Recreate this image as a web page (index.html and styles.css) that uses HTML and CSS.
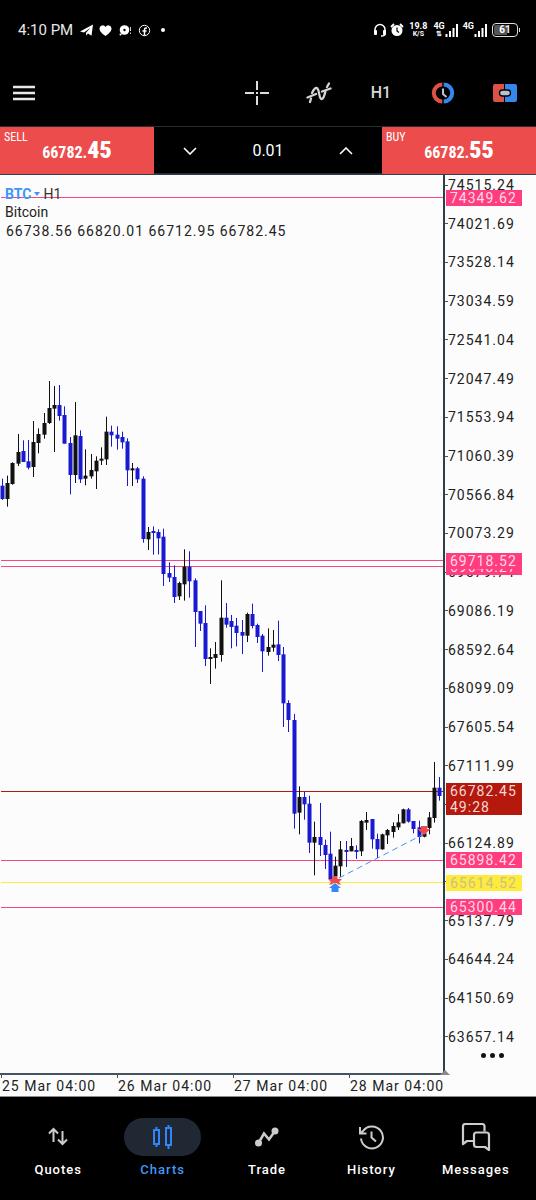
FILE: index.html
```html
<!DOCTYPE html>
<html lang="en">
<head>
<meta charset="utf-8">
<meta name="viewport" content="width=device-width, initial-scale=1">
<title>BTC H1 chart</title>
<link rel="stylesheet" href="styles.css">
</head>
<body>
<div class="status">
  <span class="clock">4:10 PM</span>
  <svg class="status-left" width="80" height="16" viewBox="0 0 80 16" aria-hidden="true">
    <path d="M-1 9.500 12 2.500 10.500 13.800 7 11.500 5 13.500V10.800L9.500 5.800 3 10.500Z" fill="#fff"/>
    <path d="M24.500 14C19.500 10.500 18.500 8.500 18.500 6.500a3.200 3.200 0 0 1 6-1.500A3.200 3.200 0 0 1 30.500 6.500c0 2-1 4-6 7.500Z" fill="#fff"/>
    <circle cx="43.500" cy="8" r="4.800" fill="#fff"/><circle cx="43.500" cy="8" r="1.200" fill="#000"/>
    <circle cx="39.500" cy="12.500" r="1" fill="#fff"/><path d="M49.500 5v4M49.500 10.500v1.500" stroke="#ccc" stroke-width="1"/>
    <circle cx="63.500" cy="8.500" r="5.200" fill="none" stroke="#fff"/>
    <path d="M66 6H65q-1.500 0-1.500 1.500v6M61.500 9h4" fill="none" stroke="#fff" stroke-width="1.500"/>
  </svg>
  <span class="more-dot"></span>
  <div class="status-right">
    <svg width="31" height="16" viewBox="0 0 31 16" aria-hidden="true">
      <path d="M2 9V7.500a5 5 0 0 1 10 0V9M12 11v1q0 2-4 2" fill="none" stroke="#fff" stroke-width="1.500"/>
      <rect x="1" y="8" width="3" height="5" rx="1" fill="#fff"/><rect x="10" y="8" width="3" height="5" rx="1" fill="#fff"/>
      <circle cx="24" cy="8.500" r="5.500" fill="#fff"/><path d="M24 5.500V9l2 1.500" fill="none" stroke="#000" stroke-width="1.200"/>
      <path d="M18 5l3-3M30 5l-3-3" stroke="#fff" stroke-width="1.800"/>
    </svg>
    <div class="speed"><b>19.8</b><small>K/S</small></div>
    <div class="signal"><div class="network"><b>4G</b><small>⇅</small></div>
      <svg width="13" height="13" viewBox="0 0 13 13" aria-hidden="true"><path d="M1.500 13v-3M5 13V7M8.500 13V4M12 13V0" stroke="#fff" stroke-width="2"/></svg></div>
    <div class="signal"><div class="network"><b>4G</b></div>
      <svg width="13" height="13" viewBox="0 0 13 13" aria-hidden="true"><path d="M1.500 13v-3M5 13V7M8.500 13V4M12 13V0" stroke="#fff" stroke-width="2"/></svg></div>
    <div class="battery"><span>61</span></div>
  </div>
</div>

<header class="toolbar">
  <button class="tool menu" aria-label="Menu"><svg width="22" height="16" viewBox="0 0 22 16"><path d="M0 2h22M0 8h22M0 14h22" stroke="#e8e8e8" stroke-width="2.400"/></svg></button>
  <button class="tool" aria-label="Crosshair"><svg width="26" height="26" viewBox="0 0 26 26"><path d="M13 1v9M13 16v9M1 13h9M16 13h9" stroke="#ddd" stroke-width="2"/><rect x="12" y="12" width="2" height="2" fill="#ddd"/></svg></button>
  <button class="tool" aria-label="Indicators"><svg width="26" height="26" viewBox="0 0 26 26" fill="none" stroke="#d4d4d4" stroke-width="2.300" stroke-linecap="round"><path d="M4 22 5 18.500M6 13Q9 6.500 11.500 8.500c2 2 1.500 10.500 4 10.500 2.500 0 3-4.500 4-8M21 7 23 3.500"/><path d="M1.500 17.500 10 14M16 11.500 24.500 8.500"/></svg></button>
  <button class="tool period">H1</button>
  <button class="tool" aria-label="Sessions"><svg width="26" height="22" viewBox="0 0 26 22"><path d="M12.300 2.500A8.500 8.500 0 0 0 12.300 19.500" fill="none" stroke="#dc5148" stroke-width="4"/><path d="M13.700 2.500A8.500 8.500 0 0 1 13.700 19.500" fill="none" stroke="#3587ed" stroke-width="4"/><path d="M13 6.500V12l3.500 3" fill="none" stroke="#b5c3d0" stroke-width="2"/></svg></button>
  <button class="tool" aria-label="One click trading"><svg width="26" height="20" viewBox="0 0 26 20"><path d="M1 3q0-2 2-2h9v18H3q-2 0-2-2Z" fill="#dc5148"/><path d="M13 1h10q2 0 2 2v14q0 2-2 2H13Z" fill="#3587ed"/><rect x="7.500" y="7" width="11" height="6" rx="3" fill="#b5c3d0" stroke="#000" stroke-width="1.300"/></svg></button>
</header>

<section class="deal">
  <button class="quote"><span class="side">SELL</span><span class="price">66782.<b>45</b></span></button>
  <div class="volume">
    <button aria-label="Decrease"><svg width="14" height="8" viewBox="0 0 14 8"><path d="M1 1l6 6 6-6" fill="none" stroke="#fff" stroke-width="1.600"/></svg></button>
    <input aria-label="Volume" value="0.01">
    <button aria-label="Increase"><svg width="14" height="8" viewBox="0 0 14 8"><path d="M1 7l6-6 6 6" fill="none" stroke="#fff" stroke-width="1.600"/></svg></button>
  </div>
  <button class="quote"><span class="side">BUY</span><span class="price">66782.<b>55</b></span></button>
</section>

<main class="chart">
  <div class="plot">
    <svg class="candles" viewBox="0 175 443 898" preserveAspectRatio="none" role="img" aria-label="Bitcoin hourly candles">
      <g class="levels"></g>
      <g class="bars"></g>
      <g class="trades">
        <path class="trade-line" d="M339 878 422 835"/>
        <path fill="#ef4b4b" d="M332.500 876h5v3h4.500l-3 3 2 2.500h-3l-1.500-1.500h-3l-1.500 1.500h-3l2-2.500-3-3h4.500Z"/>
        <path fill="#3388fa" d="M335 883l6 5h-2.500v4h-7v-4h-2.500Z"/>
        <path fill="#ef4b4b" d="M421 826h6v3h3.500l-6.500 6-6.500-6h3.500Z"/>
      </g>
    </svg>
    <div class="legend">
      <div class="symbol"><button>BTC <i></i></button><span>H1</span></div>
      <div>Bitcoin</div>
      <div class="ohlc">66738.56 66820.01 66712.95 66782.45</div>
    </div>
  </div>
  <div class="scale">
    <ul class="ticks">
      <li>74515.24</li><li>74021.69</li><li>73528.14</li><li>73034.59</li><li>72541.04</li><li>72047.49</li><li>71553.94</li><li>71060.39</li><li>70566.84</li><li>70073.29</li><li>69579.74</li><li>69086.19</li><li>68592.64</li><li>68099.09</li><li>67605.54</li><li>67111.99</li><li></li><li>66124.89</li><li></li><li>65137.79</li><li>64644.24</li><li>64150.69</li><li>63657.14</li>
    </ul>
    <div class="tags"></div>
    <button class="more" aria-label="More"><i></i><i></i><i></i></button>
  </div>
  <div class="dates"><span>25 Mar 04:00</span><span>26 Mar 04:00</span><span>27 Mar 04:00</span><span>28 Mar 04:00</span></div>
</main>

<nav class="tabs">
  <a href="#quotes"><span class="pill"><svg width="20" height="20" viewBox="0 0 20 20" fill="none" stroke="#ccc" stroke-width="2"><path d="M5.500 15V2M1 6.500 5.500 2 10 6.500M14.500 4v13M10 12.500l4.500 4.500 4.500-4.500"/></svg></span>Quotes</a>
  <a class="active" href="#charts" aria-current="page"><span class="pill"><svg width="22" height="26" viewBox="0 0 22 26" fill="none" stroke="#2f86fb" stroke-width="2"><rect x="2" y="6" width="5" height="14"/><path d="M4.500 3v3M4.500 20v3M16.500 1v3M16.500 21v4"/><rect x="14" y="4" width="5" height="17"/></svg></span>Charts</a>
  <a href="#trade"><span class="pill"><svg width="26" height="22" viewBox="0 0 26 22"><path d="M4.500 17 10 7.500l5 6L21 5" fill="none" stroke="#ccc" stroke-width="2.500"/><circle cx="4.500" cy="17" r="3.500" fill="#ccc"/><circle cx="21" cy="5" r="3.500" fill="#ccc"/></svg></span>Trade</a>
  <a href="#history"><span class="pill"><svg width="26" height="26" viewBox="0 0 26 26" fill="none" stroke="#ccc" stroke-width="2"><path d="M3 14.500A11 11 0 1 0 5 7L3 9M2 3v6.500h6.500M13.500 7.500v6l4.500 4"/></svg></span>History</a>
  <a href="#messages"><span class="pill"><svg width="30" height="28" viewBox="0 0 30 28" fill="none" stroke="#ccc" stroke-width="2.200" stroke-linejoin="round"><path d="M12.500 18H6l-4 3V3.500Q2 1 4.500 1H21q2.500 0 2.500 2.500V8.500"/><path d="M28 27l-4-3h-8.500q-2.500 0-2.500-2.500V12q0-2.500 2.500-2.500h10Q28 9.500 28 12Z"/></svg></span>Messages</a>
</nav>
<script src="chart.js"></script>
</body>
</html>
```

FILE: styles.css
```css
* { box-sizing: border-box; }
body { margin: 0; min-height: 100vh; display: flex; flex-direction: column; background: #000; color: #fff; font: 14px/16px Roboto, "Liberation Sans", sans-serif; }
button { border: 0; padding: 0; background: none; color: inherit; font: inherit; }
svg { display: block; flex: none; }

.status { height: 60px; padding: 0 18px; display: flex; align-items: center; }
.clock { font-size: 15px; margin-right: 8px; color: #e8e8e8; }
.status-left { overflow: visible; }
.more-dot { width: 4px; height: 4px; border-radius: 50%; background: #fff; }
.status-right { margin-left: auto; display: flex; align-items: center; gap: 5px; }
.speed, .network { display: flex; flex-direction: column; align-items: center; font-size: 9px; line-height: 8px; height: 16px; }
.speed { margin-right: 1px; }
.speed small, .network small { font-size: 7px; line-height: 8px; font-weight: 700; }
.signal { display: flex; align-items: center; }
.battery { position: relative; width: 26px; height: 14px; border: 1px solid #ddd; border-radius: 4px; padding: 1px; display: flex; }
.battery span { flex: 1; border-radius: 2px; background: linear-gradient(90deg, #555 61%, #000 61%); font: 700 10px/10px Roboto, sans-serif; text-align: center; }
.battery::after { content: ""; position: absolute; right: -3px; top: 4px; width: 1px; height: 4px; background: #ddd; }

.toolbar { height: 66px; display: flex; align-items: center; }
.tool { width: 62px; height: 62px; display: flex; align-items: center; justify-content: center; }
.tool.menu { width: 48px; margin-right: auto; }
.period { font-size: 16px; font-weight: 500; color: #d8d8d8; }

.deal { height: 49px; display: grid; grid-template-columns: 154fr 228fr 154fr; border-top: 1px solid #252b35; border-bottom: 1px solid #333d49; }
.quote { background: #ec4c4b; padding: 4px; display: flex; flex-direction: column; text-align: left; font-family: "Roboto Condensed", Roboto, sans-serif; }
.side { font-size: 12px; line-height: 13px; }
.price { align-self: center; font-size: 16px; font-weight: 700; line-height: 12px; }
.price b { font-size: 24px; }
.volume { display: flex; align-items: center; justify-content: space-between; padding: 2px 20px 0; border-bottom: 1px solid #252b35; }
.volume button { width: 32px; height: 32px; display: flex; align-items: center; justify-content: center; }
.volume input { width: 64px; border: 0; background: none; color: #fff; font: 16px/20px Roboto, sans-serif; text-align: center; }

.chart { flex: 1; display: grid; grid-template: 1fr 21px / 1fr 91px; background: #fcfcfc; color: #222; border-bottom: 1px solid #8c8c8c; }
.plot { position: relative; border-right: 2px solid #303d4a; border-bottom: 2px solid #465361; min-height: 0; }
.candles { position: absolute; inset: 0; width: 100%; height: 100%; }
.up { stroke: #111; }
.down { stroke: #1919d2; }
.wick { stroke-width: 1; }
.body { stroke-width: 4; }
.levels path { stroke-width: 1; }
.pink { stroke: #f84583; }
.yellow { stroke: #ffeb3b; }
.red { stroke: #b5180d; }
.trade-line { stroke: #4a94f0; stroke-dasharray: 6 4; fill: none; }
.legend { position: relative; padding: 11px 5px; display: flex; flex-direction: column; gap: 2px; }
.symbol { display: flex; gap: 3px; color: #333; }
.symbol button { display: flex; align-items: center; gap: 3px; color: #3c96fa; font-weight: 700; }
.symbol i { border: 3px solid transparent; border-top: 4px solid #3c96fa; border-bottom: 0; }
.ohlc { letter-spacing: 1px; padding: 1px 0 0 1px; }

.scale { position: relative; min-height: 0; }
.ticks { height: 100%; margin: 0; padding: 2px 0 30px; list-style: none; display: flex; flex-direction: column; justify-content: space-between; letter-spacing: 1px; font-size: 14px; }
.ticks li { min-height: 16px; display: flex; align-items: center; }
.ticks li::before { content: ""; width: 3px; height: 1px; background: #465361; }
.tag { position: absolute; left: 1px; right: 14px; transform: translateY(-8px); padding-left: 4px; letter-spacing: 1px; color: #fff; }
.tag.pink { background: #ff3d7f; color: #ffd9e5; }
.tag.yellow { background: #ffeb3b; color: #c9c08c; }
.tag.red { background: #b5180d; color: #f4d8d5; }
.more { position: absolute; right: 32px; bottom: 17px; display: flex; gap: 4px; }
.more i { width: 5px; height: 5px; border-radius: 50%; background: #111; }
.dates { grid-column: 1 / -1; display: grid; grid-template-columns: repeat(4, 116fr) 72fr; letter-spacing: 1px; white-space: nowrap; position: relative; }
.dates span { padding: 3px 0 0 2px; background: linear-gradient(#465361, #465361) 1px 0 / 1px 3px no-repeat; }
.dates::after { content: ""; position: absolute; right: 86px; top: -5px; border: 5px solid transparent; border-top: 0; border-bottom-color: #888; }

.tabs { height: 103px; padding: 21px 8px 0 6px; display: grid; grid-template-columns: repeat(5, 1fr); }
.tabs a { display: flex; flex-direction: column; align-items: center; gap: 6px; color: #fff; text-decoration: none; font-size: 13px; font-weight: 500; letter-spacing: 1px; }
.pill { width: 77px; height: 38px; border-radius: 19px; display: flex; align-items: center; justify-content: center; }
.active .pill { background: #202833; }
.tabs .active { color: #4298fa; }
```

FILE: chart.js
```js
// Each bar: direction, high, low, body top, body bottom, in thirds of a plot unit.
const bars = [];
const add = (base, rows) => rows.trim().split(/\s+/).forEach(r => {
  const [dir, h, l, a, b] = r.split(",");
  bars.push([dir === "b" ? "down" : "up", ...[h, a, b, l].map(v => base + v / 3)]);
});
add(370, `b,326,390,347,387 k,317,410,339,387 k,277,344,279,342 k,192,288,246,281 b,211,276,243,276
b,210,298,274,293 k,153,321,216,291 k,175,250,192,219 k,129,206,159,194 k,33,162,114,159
k,48,246,105,116 b,45,152,105,138 b,109,221,135,221 b,201,373,219,315 k,96,339,196,315
b,181,339,198,328 k,238,346,317,326 k,252,326,300,319 k,259,357,272,304 k,232,285,266,272
k,140,285,185,268 b,167,230,185,196 b,169,239,194,206 b,185,236,201,217 b,205,348,214,301
k,279,348,295,301 b,291,339,295,328 b,319,518,326,507`);
add(480, `k,141,210,156,178 b,139,224,153,159 b,148,223,156,175 b,146,318,170,282 b,247,306,279,293
b,256,369,291,351 k,305,360,309,349 k,208,362,260,313 b,214,353,260,304 b,295,501,301,396
b,393,453,393,431 b,376,558,429,537 k,505,612,531,537 k,486,566,522,534 k,301,545,413,525
b,369,443,413,434 b,405,505,423,441 b,414,499,437,459 b,420,522,456,467 k,398,486,402,467
b,371,445,402,438 b,431,489,435,471 b,462,576,467,514 k,445,527,501,516 k,450,515,494,503
b,422,543,493,525`);
add(600, `b,141,381,163,310 b,301,396,309,360 b,342,686,360,641 k,559,703,591,638 b,576,659,591,613
b,587,759,611,728 k,665,826,711,728 b,609,768,711,735 b,719,807,735,765 b,695,840,761,837
k,770,840,797,828 k,723,830,748,799 b,723,801,750,756 k,714,754,738,754 b,736,777,750,756
k,660,768,663,754 k,636,690,660,668 b,657,746,657,718 b,701,774,717,748 k,701,749,703,748
k,687,732,690,706 k,667,713,678,696 k,642,690,667,682 k,626,670,628,670 b,624,668,628,665
b,663,700,663,687 b,662,730,682,711 k,685,712,700,710 k,636,703,652,684 k,486,668,563,654
b,531,602,563,588`);

const SVG = "http://www.w3.org/2000/svg";
const line = (parent, cls, d) => {
  const p = document.createElementNS(SVG, "path");
  p.setAttribute("class", cls);
  p.setAttribute("d", d);
  parent.appendChild(p);
};
const group = document.querySelector(".bars");
bars.forEach(([dir, high, top, bottom, low], i) => {
  const x = Math.round(2 + i * 5.207) + 0.5;
  line(group, `wick ${dir}`, `M${x} ${high}V${low}`);
  line(group, `body ${dir}`, `M${x} ${top}V${bottom}`);
});

const TOP = 175, HEIGHT = 900;
const yOf = price => 184.6 + (74515.24 - price) / 493.55 * 38.71;
const levels = [
  ["pink", "74349.62"], ["pink", "69643.27"], ["pink", "69718.52"], ["pink", "65898.42"],
  ["yellow", "65614.52"], ["pink", "65300.44"], ["red", "66782.45", "49:28"]
];
const tags = document.querySelector(".tags");
levels.forEach(([cls, price, timer]) => {
  const y = yOf(+price);
  line(document.querySelector(".levels"), cls, `M1 ${Math.floor(y) + 0.5}H443`);
  const tag = document.createElement("div");
  tag.className = `tag ${cls}`;
  tag.style.top = `${(y - TOP) / HEIGHT * 100}%`;
  tag.append(price);
  if (timer) tag.append(document.createElement("br"), timer);
  tags.append(tag);
});
```
